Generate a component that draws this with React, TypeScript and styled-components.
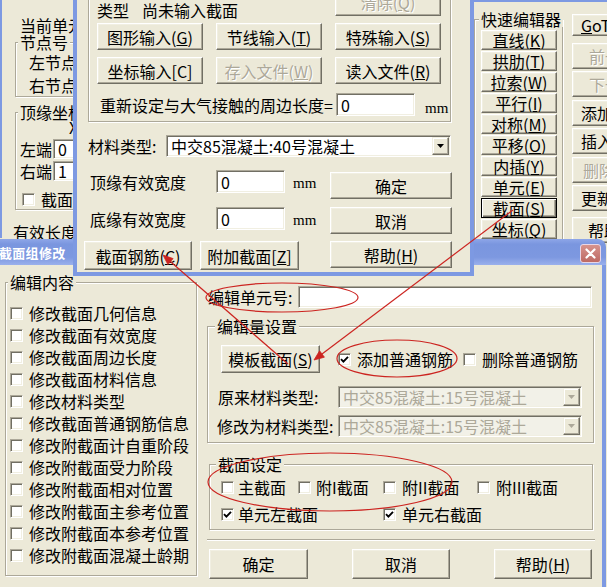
import React from "react";
import styled, { createGlobalStyle, css } from "styled-components";

const FONT = `"Noto Sans CJK SC", "Noto Sans", sans-serif`;
const FACE = "#ECE9D8";
const FRAME = "#7D99E2";
const SHADOW = "#716F64";
const MID = "#ACA899";
const LIGHT = "#F1EFE2";
const DIM = "#ACA899";
const RED = "#CC2420";

const GlobalStyle = createGlobalStyle`
  * { box-sizing: border-box; }
  html, body { margin: 0; padding: 0; background: ${FACE}; overflow: hidden; }
  body { font-family: ${FONT}; font-size: 16px; line-height: 16px; color: #000; }
`;

const Desktop = styled.div`
  position: relative;
  width: 607px;
  height: 587px;
  overflow: hidden;
  background: ${FACE};
`;

type WinProps = { $x: number; $y: number; $w: number; $h: number; $z: number };
const Win = styled.div<WinProps>`
  position: absolute;
  left: ${(p) => p.$x}px;
  top: ${(p) => p.$y}px;
  width: ${(p) => p.$w}px;
  height: ${(p) => p.$h}px;
  z-index: ${(p) => p.$z};
  background: ${FACE};
  display: flex;
  flex-direction: column;
  align-items: flex-start;
`;

const LeftWin = styled(Win)`
  border-left: 4px solid ${FRAME};
  padding: 37px 0 0 13px;
`;

const MidWin = styled(Win)`
  border: 4px solid ${FRAME};
  padding: 0 0 0 11px;
`;

const RightWin = styled(Win)`
  border-top: 4px solid ${FRAME};
  border-left: 4px solid ${FRAME};
  flex-direction: row;
  padding: 9px 0 0 4px;
`;

const DlgWin = styled(Win)`
  background: transparent;
  align-items: stretch;
`;

const TitleBar = styled.div`
  flex: none;
  height: 26px;
  display: flex;
  align-items: center;
  justify-content: space-between;
  padding: 2px 5px 0 9px;
  border-top-right-radius: 8px;
  background: linear-gradient(
    to bottom,
    #8EA6E8 0%,
    #7A96DF 20%,
    #7D98E0 70%,
    #9AB0EC 100%
  );
`;

const TitleText = styled.span`
  color: #fff;
  font-weight: bold;
  font-size: 13px;
  line-height: 16px;
  letter-spacing: 0.3px;
  white-space: nowrap;
`;

const CloseBtn = styled.span`
  width: 21px;
  height: 19px;
  border-radius: 3px;
  border: 1px solid #E8D6E6;
  background: linear-gradient(to bottom, #D6938D, #BE6A64);
  display: grid;
  place-items: center;
`;

const DlgBody = styled.div`
  flex: 1;
  background: ${FACE};
  border-left: 4px solid ${FRAME};
  border-right: 4px solid ${FRAME};
  padding: 9px 0 0 11px;
  display: grid;
  grid-template-columns: 192px 387px;
  column-gap: 10px;
  align-items: start;
`;

const Column = styled.div`
  display: flex;
  flex-direction: column;
  align-items: flex-start;
`;

type GroupProps = {
  $w: number;
  $h?: number;
  $pt?: number;
  $pl?: number;
  $pb?: number;
  $mt?: number;
  $ml?: number;
};
const Group = styled.fieldset<GroupProps>`
  flex: none;
  margin: ${(p) => p.$mt ?? 0}px 0 0 ${(p) => p.$ml ?? 0}px;
  padding: ${(p) => p.$pt ?? 0}px 0 ${(p) => p.$pb ?? 0}px ${(p) => p.$pl ?? 0}px;
  width: ${(p) => p.$w}px;
  ${(p) => p.$h != null && css`height: ${p.$h}px;`}
  min-width: 0;
  border: 1px solid ${MID};
  box-shadow: inset 1px 1px #fff, 1px 1px #fff;
  display: flex;
  flex-direction: column;
  align-items: flex-start;
`;

const Legend = styled.legend`
  padding: 0 2px;
  margin-left: -2px;
  font-size: 16px;
  line-height: 16px;
  background: ${FACE};
  white-space: nowrap;
`;

type TextProps = { $ml?: number; $mt?: number; $w?: number; $dim?: boolean };
const Text = styled.div<TextProps>`
  flex: none;
  margin-left: ${(p) => p.$ml ?? 0}px;
  margin-top: ${(p) => p.$mt ?? 0}px;
  ${(p) => p.$w != null && css`width: ${p.$w}px;`}
  white-space: nowrap;
  line-height: 16px;
  color: ${(p) => (p.$dim ? DIM : "#000")};
`;

const Unit = styled.span<{ $ml?: number; $mt?: number }>`
  flex: none;
  margin-left: ${(p) => p.$ml ?? 0}px;
  margin-top: ${(p) => p.$mt ?? 0}px;
  font-family: "Liberation Serif", serif;
  font-size: 15px;
  line-height: 16px;
`;

const Row = styled.div<{ $mt?: number; $ml?: number; $h?: number; $start?: boolean }>`
  flex: none;
  display: flex;
  align-items: ${(p) => (p.$start ? "flex-start" : "center")};
  margin-top: ${(p) => p.$mt ?? 0}px;
  margin-left: ${(p) => p.$ml ?? 0}px;
  ${(p) => p.$h != null && css`height: ${p.$h}px;`}
`;

type BtnProps = {
  $w: number;
  $h: number;
  $mt?: number;
  $ml?: number;
  $pl?: number;
  $focus?: boolean;
};
const Btn = styled.button<BtnProps>`
  flex: none;
  margin: ${(p) => p.$mt ?? 0}px 0 0 ${(p) => p.$ml ?? 0}px;
  padding: 0 0 0 ${(p) => p.$pl ?? 0}px;
  width: ${(p) => p.$w}px;
  height: ${(p) => p.$h}px;
  font-family: ${FONT};
  font-size: 16px;
  line-height: 16px;
  display: flex;
  align-items: center;
  justify-content: ${(p) => (p.$pl != null ? "flex-start" : "center")};
  background: ${FACE};
  color: #000;
  border: 1px solid;
  border-color: #fff ${SHADOW} ${SHADOW} #fff;
  box-shadow: inset -1px -1px ${MID}, inset 1px 1px ${LIGHT};
  white-space: nowrap;
  overflow: hidden;
  &:disabled {
    color: ${DIM};
    text-shadow: 1px 1px #fff;
  }
  ${(p) =>
    p.$focus &&
    css`
      border-color: #000;
      box-shadow: inset 1px 1px #fff, inset -1px -1px ${SHADOW}, inset -2px -2px ${MID};
    `}
`;

const U = styled.span`
  text-decoration: underline;
  text-underline-offset: 1px;
`;

const Field = styled.div<{ $w: number; $h: number; $off?: boolean }>`
  flex: none;
  width: ${(p) => p.$w}px;
  height: ${(p) => p.$h}px;
  background: ${(p) => (p.$off ? "#F2F1E8" : "#fff")};
  border: 1px solid;
  border-color: ${MID} #fff #fff ${MID};
  box-shadow: inset 1px 1px ${SHADOW}, inset -1px -1px ${LIGHT};
  display: flex;
  align-items: center;
  padding: 1px 1px 1px 4px;
  color: ${(p) => (p.$off ? DIM : "#000")};
  white-space: nowrap;
  overflow: hidden;
  line-height: 16px;
`;

const DropBtn = styled.span`
  flex: none;
  margin-left: auto;
  width: 17px;
  height: 100%;
  background: ${FACE};
  border: 1px solid;
  border-color: ${LIGHT} ${SHADOW} ${SHADOW} ${LIGHT};
  box-shadow: inset -1px -1px ${MID}, inset 1px 1px #fff;
  display: grid;
  place-items: center;
`;

const Box = styled.span`
  flex: none;
  width: 13px;
  height: 13px;
  background: #fff;
  border: 1px solid;
  border-color: ${MID} #fff #fff ${MID};
  box-shadow: inset 1px 1px ${SHADOW}, inset -1px -1px ${LIGHT};
  display: grid;
  place-items: center;
`;

const CheckRow = styled.div<{ $ml?: number; $h?: number; $gap?: number }>`
  flex: none;
  display: flex;
  align-items: center;
  gap: ${(p) => p.$gap ?? 6}px;
  margin-left: ${(p) => p.$ml ?? 0}px;
  height: ${(p) => p.$h ?? 16}px;
  white-space: nowrap;
`;

const BtnGrid = styled.div`
  display: grid;
  grid-template-columns: repeat(3, 106px);
  grid-template-rows: 28px 27px 27px;
  column-gap: 13px;
  row-gap: 7px;
`;

const TypeLine = styled.div`
  grid-column: 1 / 3;
  align-self: end;
  margin-bottom: -2px;
  display: flex;
  gap: 13px;
  white-space: nowrap;
`;

const FormGrid = styled.div`
  margin-top: 13px;
  display: grid;
  grid-template-columns: 128px 69px 45px 122px;
  grid-template-rows: 30px 30px;
  row-gap: 7px;
  align-items: start;
`;

const Cell = styled.div<{ $pl?: number }>`
  height: 23px;
  display: flex;
  align-items: center;
  padding-left: ${(p) => p.$pl ?? 0}px;
  white-space: nowrap;
`;

const ListCol = styled.div`
  display: flex;
  flex-direction: column;
`;

const QuickCol = styled.div`
  display: flex;
  flex-direction: column;
  gap: 1px;
`;

const SideCol = styled.div`
  margin-left: 9px;
  display: flex;
  flex-direction: column;
`;

const SetGrid = styled.div`
  margin-left: 3px;
  display: grid;
  grid-template-columns: 77px 85px 94px auto;
  grid-auto-rows: 16px;
  row-gap: 11px;
`;

const Wide = styled.div`
  grid-column: 3 / 5;
`;

const Separator = styled.div`
  margin-top: 9px;
  width: 388px;
  height: 2px;
  border-top: 1px solid ${MID};
  border-bottom: 1px solid #fff;
`;

const BtnBar = styled.div`
  margin-top: 8px;
  width: 388px;
  padding: 0 3px 0 2px;
  display: flex;
  justify-content: space-between;
`;

const Marks = styled.svg`
  position: absolute;
  left: 0;
  top: 0;
  width: 607px;
  height: 587px;
  z-index: 10;
  pointer-events: none;
`;

const Tick = () => (
  <svg width="9" height="9" viewBox="0 0 9 9">
    <path d="M1 4.2 L3.4 6.6 L8 1.8" fill="none" stroke="#000" strokeWidth="1.9" />
  </svg>
);

const Arrow = ({ off }: { off?: boolean }) => (
  <svg width="7" height="4" viewBox="0 0 7 4">
    <path d="M0 0 H7 L3.5 4 Z" fill={off ? DIM : "#000"} />
  </svg>
);

const Check = ({ on, label, ml, gap }: { on?: boolean; label: string; ml?: number; gap?: number }) => (
  <CheckRow $ml={ml} $gap={gap}>
    <Box>{on && <Tick />}</Box>
    <span>{label}</span>
  </CheckRow>
);

const Select = ({ w, value, off }: { w: number; value: string; off?: boolean }) => (
  <Field $w={w} $h={22} $off={off}>
    <span>{value}</span>
    <DropBtn>
      <Arrow off={off} />
    </DropBtn>
  </Field>
);

const quick: [string, string][] = [
  ["直线", "K"],
  ["拱肋", "T"],
  ["拉索", "W"],
  ["平行", "I"],
  ["对称", "M"],
  ["平移", "O"],
  ["内插", "Y"],
  ["单元", "E"],
  ["截面", "S"],
  ["坐标", "Q"],
];

const editItems = [
  "修改截面几何信息",
  "修改截面有效宽度",
  "修改截面周边长度",
  "修改截面材料信息",
  "修改材料类型",
  "修改截面普通钢筋信息",
  "修改附截面计自重阶段",
  "修改附截面受力阶段",
  "修改附截面相对位置",
  "修改附截面主参考位置",
  "修改附截面本参考位置",
  "修改附截面混凝土龄期",
];

export default function App() {
  return (
    <>
      <GlobalStyle />
      <Desktop>
        {/* background window at the left */}
        <LeftWin $x={-2} $y={-20} $w={110} $h={258} $z={1}>
          <Text $ml={5}>当前单元:</Text>
          <Group $mt={1} $w={100} $pl={4} $pt={4} $pb={3}>
            <Legend>节点号</Legend>
            <Text $ml={9}>左节点号:</Text>
            <Text $ml={9} $mt={7}>右节点号:</Text>
          </Group>
          <Group $mt={7} $w={100} $pl={4} $pb={2}>
            <Legend>顶缘坐标</Legend>
            <Text $ml={49} $mt={-1}>X</Text>
            <Row $mt={4} $h={20}>
              <Text $w={33}>左端</Text>
              <Field $w={60} $h={20}>0</Field>
            </Row>
            <Row $mt={2} $h={20}>
              <Text $w={33}>右端</Text>
              <Field $w={60} $h={20}>1</Field>
            </Row>
            <Row $mt={10} $h={16}>
              <Check ml={2} label="截面高度" />
            </Row>
          </Group>
          <Text $ml={-2} $mt={14}>有效长度1</Text>
        </LeftWin>

        {/* quick editor window at the right */}
        <RightWin $x={466} $y={-2} $w={200} $h={252} $z={2}>
          <Group $w={89} $h={270} $pl={6} $pt={3}>
            <Legend>快速编辑器</Legend>
            <QuickCol>
              {quick.map(([t, k]) => (
                <Btn key={k} $w={76} $h={20} $focus={k === "S"}>
                  {t}(<U>{k}</U>)
                </Btn>
              ))}
            </QuickCol>
          </Group>
          <SideCol>
            <Btn $w={80} $h={22} $mt={3} $pl={8}>
              <U>G</U>oTo...
            </Btn>
            <Btn $w={80} $h={26} $mt={7} $pl={16} disabled>
              前一个
            </Btn>
            <Btn $w={80} $h={26} $mt={2} $pl={16} disabled>
              下一个
            </Btn>
            <Btn $w={80} $h={26} $mt={3} $pl={8}>
              添加单元
            </Btn>
            <Btn $w={80} $h={26} $mt={2} $pl={8}>
              插入单元
            </Btn>
            <Btn $w={80} $h={26} $mt={3} $pl={10} disabled>
              删除单元
            </Btn>
            <Btn $w={80} $h={26} $mt={2} $pl={8}>
              更新单元
            </Btn>
            <Btn $w={80} $h={26} $mt={6} $pl={15}>
              帮助(<U>H</U>)
            </Btn>
          </SideCol>
        </RightWin>

        {/* 截面组修改 dialog */}
        <DlgWin $x={-10} $y={239} $w={616} $h={360} $z={3}>
          <TitleBar>
            <TitleText>截面组修改</TitleText>
            <CloseBtn>
              <svg width="11" height="11" viewBox="0 0 11 11">
                <path d="M1.5 1.5 L9.5 9.5 M9.5 1.5 L1.5 9.5" stroke="#fff" strokeWidth="2.2" strokeLinecap="round" />
              </svg>
            </CloseBtn>
          </TitleBar>
          <DlgBody>
            <Group $w={192} $h={302} $pl={4} $pt={12}>
              <Legend>编辑内容</Legend>
              <ListCol>
                {editItems.map((t) => (
                  <CheckRow key={t} $h={22}>
                    <Box />
                    <span>{t}</span>
                  </CheckRow>
                ))}
              </ListCol>
            </Group>

            <Column>
              <Row $mt={12} $h={22}>
                <Text $ml={1} $w={90}>编辑单元号:</Text>
                <Field $w={294} $h={22} />
              </Row>

              <Group $mt={10} $w={387} $pl={9} $pt={11} $pb={5}>
                <Legend>编辑量设置</Legend>
                <Row $h={28}>
                  <Btn $w={99} $h={28} $ml={4}>
                    模板截面(<U>S</U>)
                  </Btn>
                  <Check ml={18} on label="添加普通钢筋" />
                  <Check ml={10} label="删除普通钢筋" />
                </Row>
                <Row $mt={13} $h={22}>
                  <Text $ml={1} $w={120}>原来材料类型:</Text>
                  <Select w={244} off value="中交85混凝土:15号混凝土" />
                </Row>
                <Row $mt={7} $h={22}>
                  <Text $w={121}>修改为材料类型:</Text>
                  <Select w={244} off value="中交85混凝土:15号混凝土" />
                </Row>
              </Group>

              <Group $mt={13} $ml={2} $w={384} $pl={8} $pt={7} $pb={7}>
                <Legend>截面设定</Legend>
                <SetGrid>
                  <Check gap={4} label="主截面" />
                  <Check gap={5} label="附I截面" />
                  <Check label="附II截面" />
                  <Check label="附III截面" />
                  <Check gap={4} on label="单元左截面" />
                  <span />
                  <Wide>
                    <Check on label="单元右截面" />
                  </Wide>
                </SetGrid>
              </Group>

              <Separator />
              <BtnBar>
                <Btn $w={99} $h={30}>确定</Btn>
                <Btn $w={98} $h={30}>取消</Btn>
                <Btn $w={98} $h={30}>
                  帮助(<U>H</U>)
                </Btn>
              </BtnBar>
            </Column>
          </DlgBody>
        </DlgWin>

        {/* section input window in the middle */}
        <MidWin $x={73} $y={-24} $w={401} $h={300} $z={4}>
          <Group $w={363} $pt={7} $pl={8} $pb={5}>
            <BtnGrid>
              <TypeLine>
                <span>类型</span>
                <span>尚未输入截面</span>
              </TypeLine>
              <Btn $w={106} $h={28} disabled>
                清除(<U>Q</U>)
              </Btn>
              <Btn $w={106} $h={27}>
                图形输入(<U>G</U>)
              </Btn>
              <Btn $w={106} $h={27}>
                节线输入(<U>T</U>)
              </Btn>
              <Btn $w={106} $h={27}>
                特殊输入(<U>S</U>)
              </Btn>
              <Btn $w={106} $h={27}>
                坐标输入[C]
              </Btn>
              <Btn $w={106} $h={27} disabled>
                存入文件(<U>W</U>)
              </Btn>
              <Btn $w={106} $h={27}>
                读入文件(<U>R</U>)
              </Btn>
            </BtnGrid>
            <Row $mt={9} $h={23}>
              <Text $ml={3} $w={236}>重新设定与大气接触的周边长度=</Text>
              <Field $w={79} $h={23}>0</Field>
              <Unit $ml={10} $mt={6}>mm</Unit>
            </Row>
          </Group>

          <Row $mt={13} $h={22}>
            <Text $w={78}>材料类型:</Text>
            <Select w={285} value="中交85混凝土:40号混凝土" />
          </Row>

          <FormGrid>
            <Cell $pl={2}>顶缘有效宽度</Cell>
            <Field $w={69} $h={23}>0</Field>
            <Cell $pl={8}>
              <Unit $mt={3}>mm</Unit>
            </Cell>
            <Btn $w={122} $h={27} $mt={2}>确定</Btn>
            <Cell $pl={2}>底缘有效宽度</Cell>
            <Field $w={69} $h={23}>0</Field>
            <Cell $pl={8}>
              <Unit $mt={3}>mm</Unit>
            </Cell>
            <Btn $w={122} $h={27} $mt={0}>取消</Btn>
          </FormGrid>

          <Row $mt={4} $ml={-4} $start>
            <Btn $w={108} $h={29}>
              截面钢筋(<U>C</U>)
            </Btn>
            <Btn $w={99} $h={29} $ml={8}>
              附加截面[<U>Z</U>]
            </Btn>
            <Btn $w={122} $h={27} $ml={31}>
              帮助(<U>H</U>)
            </Btn>
          </Row>
        </MidWin>

        {/* red annotations */}
        <Marks viewBox="0 0 607 587">
          <g fill="none" stroke={RED} strokeWidth="1.2">
            <ellipse cx="282" cy="297.5" rx="76" ry="14.5" />
            <ellipse cx="397" cy="358.5" rx="60" ry="18.5" />
            <ellipse cx="330" cy="482" rx="122" ry="29" />
            <line x1="513" y1="210" x2="320" y2="355.5" />
            <line x1="288" y1="364" x2="168" y2="259.5" />
          </g>
          <g fill={RED} stroke={RED} strokeWidth="0.8">
            <polygon points="314,360 324.4,357.2 319.6,350.8" />
            <polygon points="163,255 173.1,258.6 167.9,264.6" />
          </g>
        </Marks>
      </Desktop>
    </>
  );
}
